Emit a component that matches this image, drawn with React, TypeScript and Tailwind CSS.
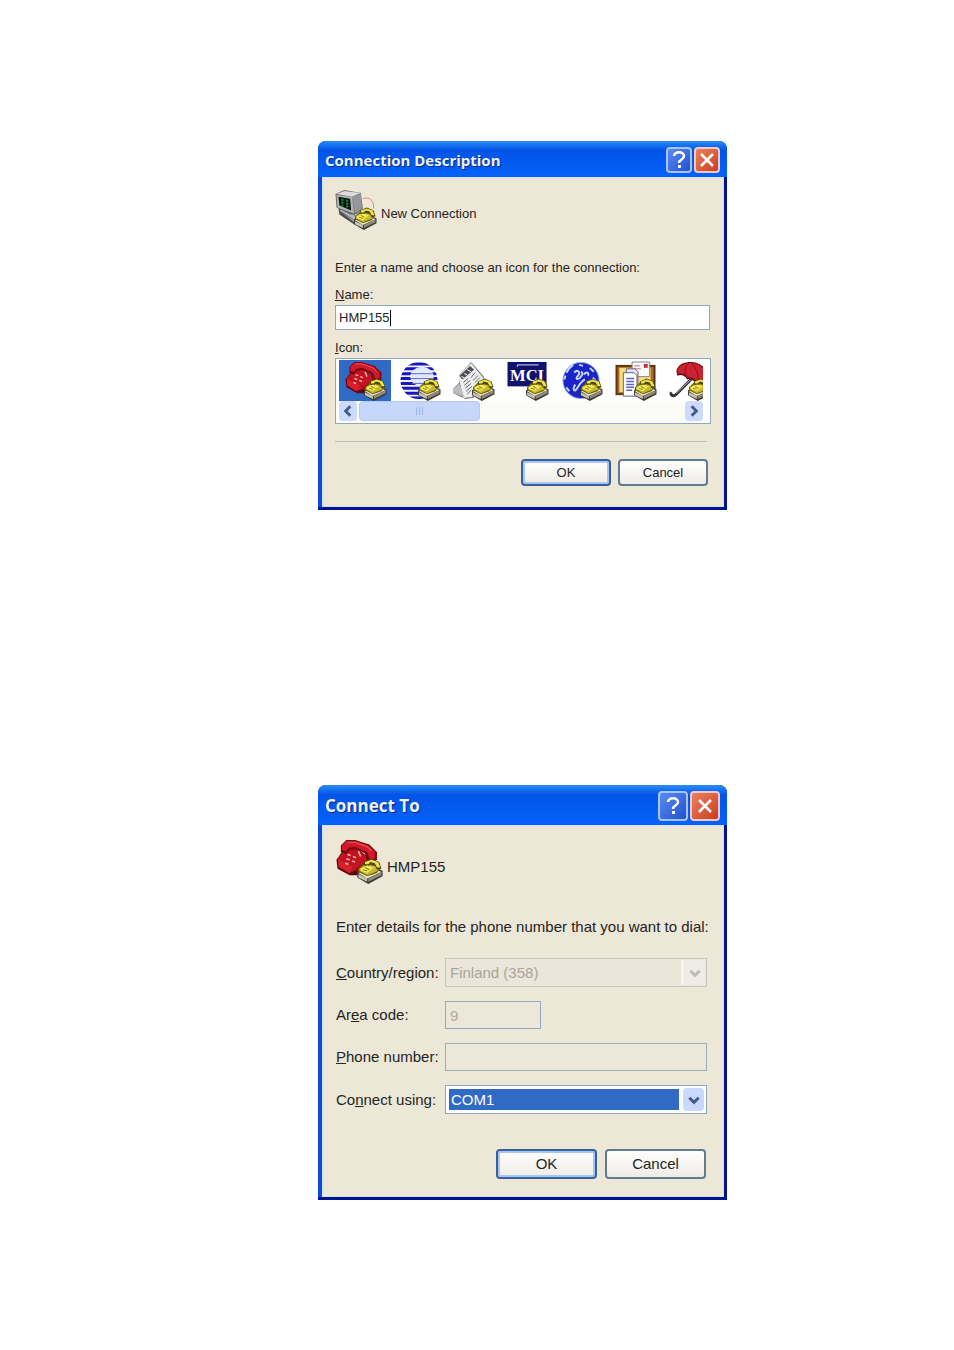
import type { ReactNode } from "react";

import { clsx } from "clsx";

function SmallPhone() {
  return (
    <g transform="translate(19 18)">
      <path d="M0 12 L13 7 L23 11 L23 16 L10 23 L0 17Z" fill="#3c3a30" />
      <path d="M1 13 L13 8 L22 12 L9 18Z" fill="#f0ecd0" />
      <path d="M1 14 L9 18 L9 21 L1 17Z" fill="#c8c4b4" />
      <path d="M10 18 L22 12 L22 15 L10 21Z" fill="#8e8a7c" />
      <path d="M1 9 L7 3 L17 4 L21 9 L18 13 L9 16 L1 12Z" fill="#6f6410" />
      <path d="M2 9 L8 5 L17 7 L19 11 L9 15 L2 11Z" fill="#c9b92a" />
      <path d="M6 3 L13 0 L20 3 L22 9 L18 10 L16 6 L12 5 L10 7 L6 6Z" fill="#4d4608" />
      <path d="M7 3 L13 1 L19 3 L21 8 L18 8 L16 4 L12 3 L10 5 L7 5Z" fill="#ece24a" />
      <path d="M3 9 L9 6 L15 8 L9 13 L3 11Z" fill="#f4ec5c" />
      <path d="M7 8 L11 10 M5 10 L9 11" stroke="#8d7d10" />
    </g>
  );
}

function RedPhone() {
  return (
    <>
      <path d="M0 19 L7 9 L18 8 L32 19 L34 24 L19 33 L12 33 L1 27Z" fill="#5e0610" />
      <path d="M1 18 L8 10 L19 9 L30 18 L17 29 L11 31 L2 25Z" fill="#c01420" />
      <path d="M2 19 L15 25 L12 31 L2 25Z" fill="#d6202c" />
      <path d="M18 27 L30 19 L32 22 L19 31Z" fill="#960b18" />
      <path d="M4 6 L9 1 L17 1 L30 5 L37 12 L37 19 L32 22 L27 18 L26 13 L17 9 L12 10 L9 14 L4 12Z" fill="#7d0712" />
      <path d="M5 6 L9 2 L17 2 L29 6 L35 12 L35 17 L31 19 L28 12 L17 7 L11 8 L9 11 L5 10Z" fill="#d01a27" />
      <path d="M10 3 L17 3 L28 7 L32 11" stroke="#ea5560" fill="none" />
      <path d="M10 14 L13 15 M15 16 L18 17 M9 18 L12 19 M14 20 L17 21 M8 22 L11 23 M20 11 L22 16" stroke="#f0a9ab" strokeWidth="1.5" />
    </>
  );
}

function Computer() {
  return (
    <>
      <path d="M3 19 L8 17 L24 29 L20 36 L4 25Z" fill="#4a4a4f" />
      <path d="M4 21 L10 19 L23 29 L19 33Z" fill="#b5b5b9" />
      <path d="M7 23 L19 31" stroke="#6c6c70" />
      <path d="M0 4 L9 0 L26 3 L28 19 L21 25 L15 25 L1 18Z" fill="#67676b" />
      <path d="M1 4 L9 1 L26 3 L17 7Z" fill="#dcdcdf" />
      <path d="M17 7 L26 4 L27 19 L20 24Z" fill="#96969b" />
      <path d="M1 5 L17 7 L19 24 L2 18Z" fill="#b3b3b8" />
      <path d="M3 7 L15 9 L16 21 L4 16Z" fill="#07160c" />
      <path d="M6 10 H8 M6 13 H8 M6 16 H8 M11 11 H13 M11 14 H13 M11 17 H13" stroke="#1e8a43" strokeWidth="2" />
      <path d="M28 9 C34 6 40 11 39 19" stroke="#e58b72" fill="none" />
    </>
  );
}

function StripedGlobe() {
  return (
    <>
      <clipPath id="striped-globe">
        <circle cx="20" cy="20" r="19" />
      </clipPath>
      <g clipPath="url(#striped-globe)">
        <circle cx="20" cy="20" r="19" fill="#eef1ff" />
        <path d="M0 3 H40 M0 8 H40 M0 13 H40 M0 18 H40 M0 23 H40 M0 28 H40 M0 33 H40 M0 38 H40" stroke="#1818c0" strokeWidth="3" />
        <ellipse cx="23" cy="16" rx="12" ry="10" fill="#e3e9fb" />
        <path d="M12 13 H34 M11 18 H35 M13 23 H33" stroke="#5a68dc" strokeWidth="1" />
      </g>
    </>
  );
}

function Newspaper() {
  return (
    <>
      <path d="M0 28 L6 22 L6 14 L18 1 L31 16 L32 22 L20 38 L12 39 L0 33Z" fill="#77777c" />
      <path d="M5 15 L18 2 L31 18 L19 37 L10 38Z" fill="#ededed" />
      <path d="M0 28 L6 23 L11 37 L1 33Z" fill="#bcbcc1" />
      <path d="M6 15 L17 5 L21 9 L9 19Z" fill="#4d4d52" />
      <path d="M8 16 L11 17 M11 13 L14 14 M14 9 L18 11" stroke="#fff" />
      <path d="M10 22 L15 18 M11 25 L17 20 M12 28 L18 23 M13 31 L19 26 M14 34 L18 30 M18 17 L22 12 M20 20 L25 15 M22 22 L27 17" stroke="#636368" />
    </>
  );
}

function MciSign() {
  return (
    <>
      <rect y="1" width="40" height="25" fill="#10126e" />
      <path d="M10 6 V4 H32" stroke="#dfe3ff" fill="none" />
      <text x="20" y="20" textAnchor="middle" fontSize="17" fontWeight="700" fontFamily="Liberation Serif, serif" fill="#fff">
        MCI
      </text>
    </>
  );
}

function Globe() {
  return (
    <>
      <circle cx="20" cy="20" r="19" fill="#8ea3e6" />
      <circle cx="20" cy="20" r="18" fill="#1a24c8" />
      <path d="M5 12 C7 8 9 6 12 4 M3 19 L4 15 M5 27 L8 31 M13 12 C16 8 20 11 17 15 C14 18 16 20 19 17 C22 14 22 12 20 11 M23 14 C25 10 29 12 27 15 M14 24 C11 29 13 33 16 28 C19 23 21 20 24 19 M29 7 L33 11 M18 4 L22 5 M32 17 L35 20" stroke="#c6d5ff" strokeWidth="2" fill="none" />
    </>
  );
}

function Clipboard() {
  return (
    <>
      <rect y="4" width="41" height="31" fill="#5b3511" />
      <rect x="2" y="6" width="37" height="27" fill="#a8692a" />
      <rect x="4" y="7" width="32" height="25" fill="#f8df7c" />
      <path d="M17 1 H35 V16 H17Z" fill="#fafafa" stroke="#83838b" />
      <rect x="29" y="3" width="4" height="4" fill="#cb2b32" />
      <path d="M19 5 H25 M19 8 H26" stroke="#c4677a" />
      <path d="M11 8 H20 L23 11 V34 H11Z" fill="#e2e4f7" stroke="#61617f" />
      <path d="M8 12 H19 L22 15 V36 H8Z" fill="#fff" stroke="#61617f" />
      <path d="M11 18 H19 M11 21 H19 M11 24 H19 M11 27 H19 M11 30 H17" stroke="#5866ca" strokeWidth="1.5" />
    </>
  );
}

function Umbrella() {
  return (
    <>
      <path d="M24 17 L7 34 C4 37 0 35 2 32" stroke="#35333a" strokeWidth="3" fill="none" />
      <path d="M24 17 L7 33" stroke="#b5b3b9" />
      <path d="M7 10 C9 3 15 1 22 1 C32 1 39 8 40 18 L37 27 C34 24 31 24 28 25 C26 20 22 18 18 19 C15 14 12 14 8 15Z" fill="#6f0c17" />
      <path d="M8 10 C10 4 16 2 22 2 C31 2 38 9 39 18 L36 25 C34 22 31 22 29 23 C27 18 22 16 19 17 C16 13 12 12 9 13Z" fill="#cb2430" />
      <path d="M20 2 C15 6 15 12 18 17 M22 2 C28 7 30 15 29 23" stroke="#8b0e1a" fill="none" />
    </>
  );
}

function IconImage({ className, children }: { className: string; children: ReactNode }) {
  return (
    <svg viewBox="0 0 42 41" aria-hidden="true" className={clsx("shrink-0", className)}>
      {children}
      <SmallPhone />
    </svg>
  );
}

function Chevron({ className }: { className?: string }) {
  return (
    <svg viewBox="0 0 12 12" aria-hidden="true" className={clsx("size-3.5", className)}>
      <path d="M2 4 L6 8 L10 4" fill="none" stroke="currentColor" strokeWidth="2.5" />
    </svg>
  );
}

const icons = [
  { name: "Telephone", art: <RedPhone /> },
  { name: "Striped globe", art: <StripedGlobe /> },
  { name: "Newspaper", art: <Newspaper /> },
  { name: "MCI", art: <MciSign /> },
  { name: "World", art: <Globe /> },
  { name: "Clipboard", art: <Clipboard /> },
  { name: "Umbrella", art: <Umbrella /> },
];

type DialogProps = {
  title: string;
  large?: boolean;
  children: ReactNode;
};

function Dialog({ title, large, children }: DialogProps) {
  const control = clsx(
    "flex items-center justify-center rounded-[4px] border-2 text-white",
    large ? "size-[30px]" : "size-[26px]",
  );

  return (
    <section
      aria-label={title}
      className="w-full max-w-[409px] overflow-hidden rounded-t-lg border-b-[3px] border-[#00148f] bg-[#00148f]"
    >
      <header
        className={clsx(
          "flex items-center gap-0.5 bg-linear-to-b from-[#2b8cf8] via-[#0453e6] via-25% to-[#0463fa] px-[7px] pt-0.5",
          large ? "h-10" : "h-9",
        )}
      >
        <h2
          className={clsx(
            "flex-1 font-['Open_Sans',sans-serif] font-bold text-[#eef4ff] [text-shadow:1px_1px_1px_#0a2a86]",
            large ? "text-[17px]" : "text-[15px]",
          )}
        >
          {title}
        </h2>
        <button
          type="button"
          aria-label="Help"
          className={clsx(control, "border-[#a9c4fa] bg-linear-to-br from-[#5b8cf2] to-[#2450cf]")}
        >
          <svg viewBox="0 0 20 20" className="size-5" aria-hidden="true">
            <path d="M5 6 C5 1 15 1 15 6 C15 10 10 9 10 13" fill="none" stroke="currentColor" strokeWidth="2.5" />
            <path d="M9 15 H12 V18 H9Z" fill="currentColor" />
          </svg>
        </button>
        <button
          type="button"
          aria-label="Close"
          className={clsx(control, "border-[#f0c8c4] bg-linear-to-br from-[#ea8060] to-[#cb3a1a]")}
        >
          <svg viewBox="0 0 20 20" className="size-5" aria-hidden="true">
            <path d="M4 4 L16 16 M16 4 L4 16" stroke="currentColor" strokeWidth="2.5" />
          </svg>
        </button>
      </header>
      <div className="border-r-[3px] border-l-4 border-r-[#00148f] border-l-[#0a4bdc]">
        <div className="border border-[#d3e0f8] bg-[#ece7d7] px-3">{children}</div>
      </div>
    </section>
  );
}

function PushButton({ primary, large, children }: { primary?: boolean; large?: boolean; children: ReactNode }) {
  return (
    <button
      type="button"
      className={clsx(
        "rounded-[4px] border-2 bg-linear-to-b from-white to-[#eeece6]",
        large ? "h-[30px] w-[101px]" : "h-[27px] w-[90px]",
        primary
          ? "border-[#35619f] shadow-[inset_0_0_0_2px_#a9c5f2]"
          : "border-[#5f7b92]",
      )}
    >
      {children}
    </button>
  );
}

function ConnectionDescription() {
  return (
    <Dialog title="Connection Description">
      <form className="pt-3 pb-5 text-[13px] leading-5">
        <div className="flex h-10 items-center gap-1">
          <IconImage className="h-10 w-[42px]">
            <Computer />
          </IconImage>
          <span className="pt-2">New Connection</span>
        </div>
        <p className="mt-7">Enter a name and choose an icon for the connection:</p>
        <label className="mt-[7px] block">
          <span className="block">
            <u>N</u>ame:
          </span>
          <span className="mr-px flex h-[25px] items-center border border-[#8fa9bd] bg-white px-[3px]">
            <input defaultValue="HMP155" className="field-sizing-content outline-none" />
            <span className="h-4 w-px bg-black" />
          </span>
        </label>
        <div id="icon-label" className="mt-2">
          <u>I</u>con:
        </div>
        <div className="border border-[#8fa9bd] bg-white px-[3px] pt-px">
          <div role="listbox" aria-labelledby="icon-label" className="mr-1 flex gap-0.5 overflow-hidden">
            {icons.map((icon, i) => (
              <button
                key={icon.name}
                type="button"
                role="option"
                aria-label={icon.name}
                aria-selected={i === 0}
                className={clsx("w-[52px] shrink-0 pt-px pl-[6px]", i === 0 && "bg-[#316ac5]")}
              >
                <IconImage className="block h-10 w-[42px]">{icon.art}</IconImage>
              </button>
            ))}
          </div>
          <div className="mr-1 flex h-[22px] items-center gap-0.5 bg-[#fbfbf8] pb-0.5">
            <button type="button" aria-label="Scroll left" className="flex h-5 w-[18px] items-center justify-center rounded-sm bg-[#ccdafb] text-[#435c8f]">
              <Chevron className="rotate-90" />
            </button>
            <div className="flex h-5 w-[121px] items-center justify-center gap-0.5 rounded-sm border border-[#b5c9f5] bg-[#c7d6fb]">
              <span className="h-2 w-px bg-[#9db5ea]" />
              <span className="h-2 w-px bg-[#9db5ea]" />
              <span className="h-2 w-px bg-[#9db5ea]" />
            </div>
            <button type="button" aria-label="Scroll right" className="ml-auto flex h-5 w-[18px] items-center justify-center rounded-sm bg-[#ccdafb] text-[#435c8f]">
              <Chevron className="-rotate-90" />
            </button>
          </div>
        </div>
        <hr className="mt-[17px] mr-1 border-[#bfc0b4]" />
        <div className="mt-[17px] mr-[3px] flex justify-end gap-[7px]">
          <PushButton primary>OK</PushButton>
          <PushButton>Cancel</PushButton>
        </div>
      </form>
    </Dialog>
  );
}

const rowLabel = "w-[109px] shrink-0";

function ConnectTo() {
  return (
    <Dialog title="Connect To" large>
      <form className="pt-3 pr-1 pb-[17px] pl-px text-[15px] leading-5">
        <div className="flex h-[46px] items-center gap-1">
          <IconImage className="h-[45px] w-[47px]">
            <RedPhone />
          </IconImage>
          <span className="pt-3">HMP155</span>
        </div>
        <p className="mt-[33px] whitespace-nowrap">
          Enter details for the phone number that you want to dial:
        </p>
        <div className="mt-[21px] flex flex-col gap-3.5">
          <div className="flex items-center">
            <label htmlFor="country" className={rowLabel}>
              <u>C</u>ountry/region:
            </label>
            <div className="relative flex-1">
              <select
                id="country"
                disabled
                className="block h-[29px] w-full appearance-none border border-[#c9c4b8] bg-[#ebe5da] px-1 text-[#aaa699] opacity-100"
              >
                <option>Finland (358)</option>
              </select>
              <span className="pointer-events-none absolute top-0.5 right-0.5 flex h-[25px] w-6 items-center justify-center border-l-[3px] border-[#f7f4ec] bg-[#efebe5] text-[#bdbab5]">
                <Chevron />
              </span>
            </div>
          </div>
          <div className="flex items-center">
            <label htmlFor="area" className={rowLabel}>
              Ar<u>e</u>a code:
            </label>
            <input
              id="area"
              disabled
              defaultValue="9"
              className="h-7 w-24 border border-[#93a9c4] bg-[#ece7d9] px-1 text-[#b1ac95]"
            />
          </div>
          <div className="flex items-center">
            <label htmlFor="phone" className={rowLabel}>
              <u>P</u>hone number:
            </label>
            <input id="phone" disabled className="h-7 min-w-0 flex-1 border border-[#9db0b8] bg-[#ece7d9] px-1" />
          </div>
          <div className="flex items-center">
            <label htmlFor="port" className={rowLabel}>
              Co<u>n</u>nect using:
            </label>
            <div className="relative flex-1 border border-[#8fa9bd]">
              <select
                id="port"
                className="block h-[27px] w-full appearance-none border-[3px] border-r-[27px] border-white bg-[#316ac5] px-0.5 text-white outline-none"
              >
                <option>COM1</option>
              </select>
              <span className="pointer-events-none absolute top-0.5 right-0.5 flex h-[23px] w-[21px] items-center justify-center rounded-sm bg-[#c9d8fb] text-[#435c8f]">
                <Chevron />
              </span>
            </div>
          </div>
        </div>
        <div className="mt-[35px] mr-px flex justify-end gap-2">
          <PushButton primary large>
            OK
          </PushButton>
          <PushButton large>Cancel</PushButton>
        </div>
      </form>
    </Dialog>
  );
}

export default function App() {
  return (
    <main className="flex flex-col items-center gap-[275px] bg-white pt-[141px] pb-[150px] pl-[91px] font-['Liberation_Sans',Arial,sans-serif] text-[#25241f]">
      <ConnectionDescription />
      <ConnectTo />
    </main>
  );
}
